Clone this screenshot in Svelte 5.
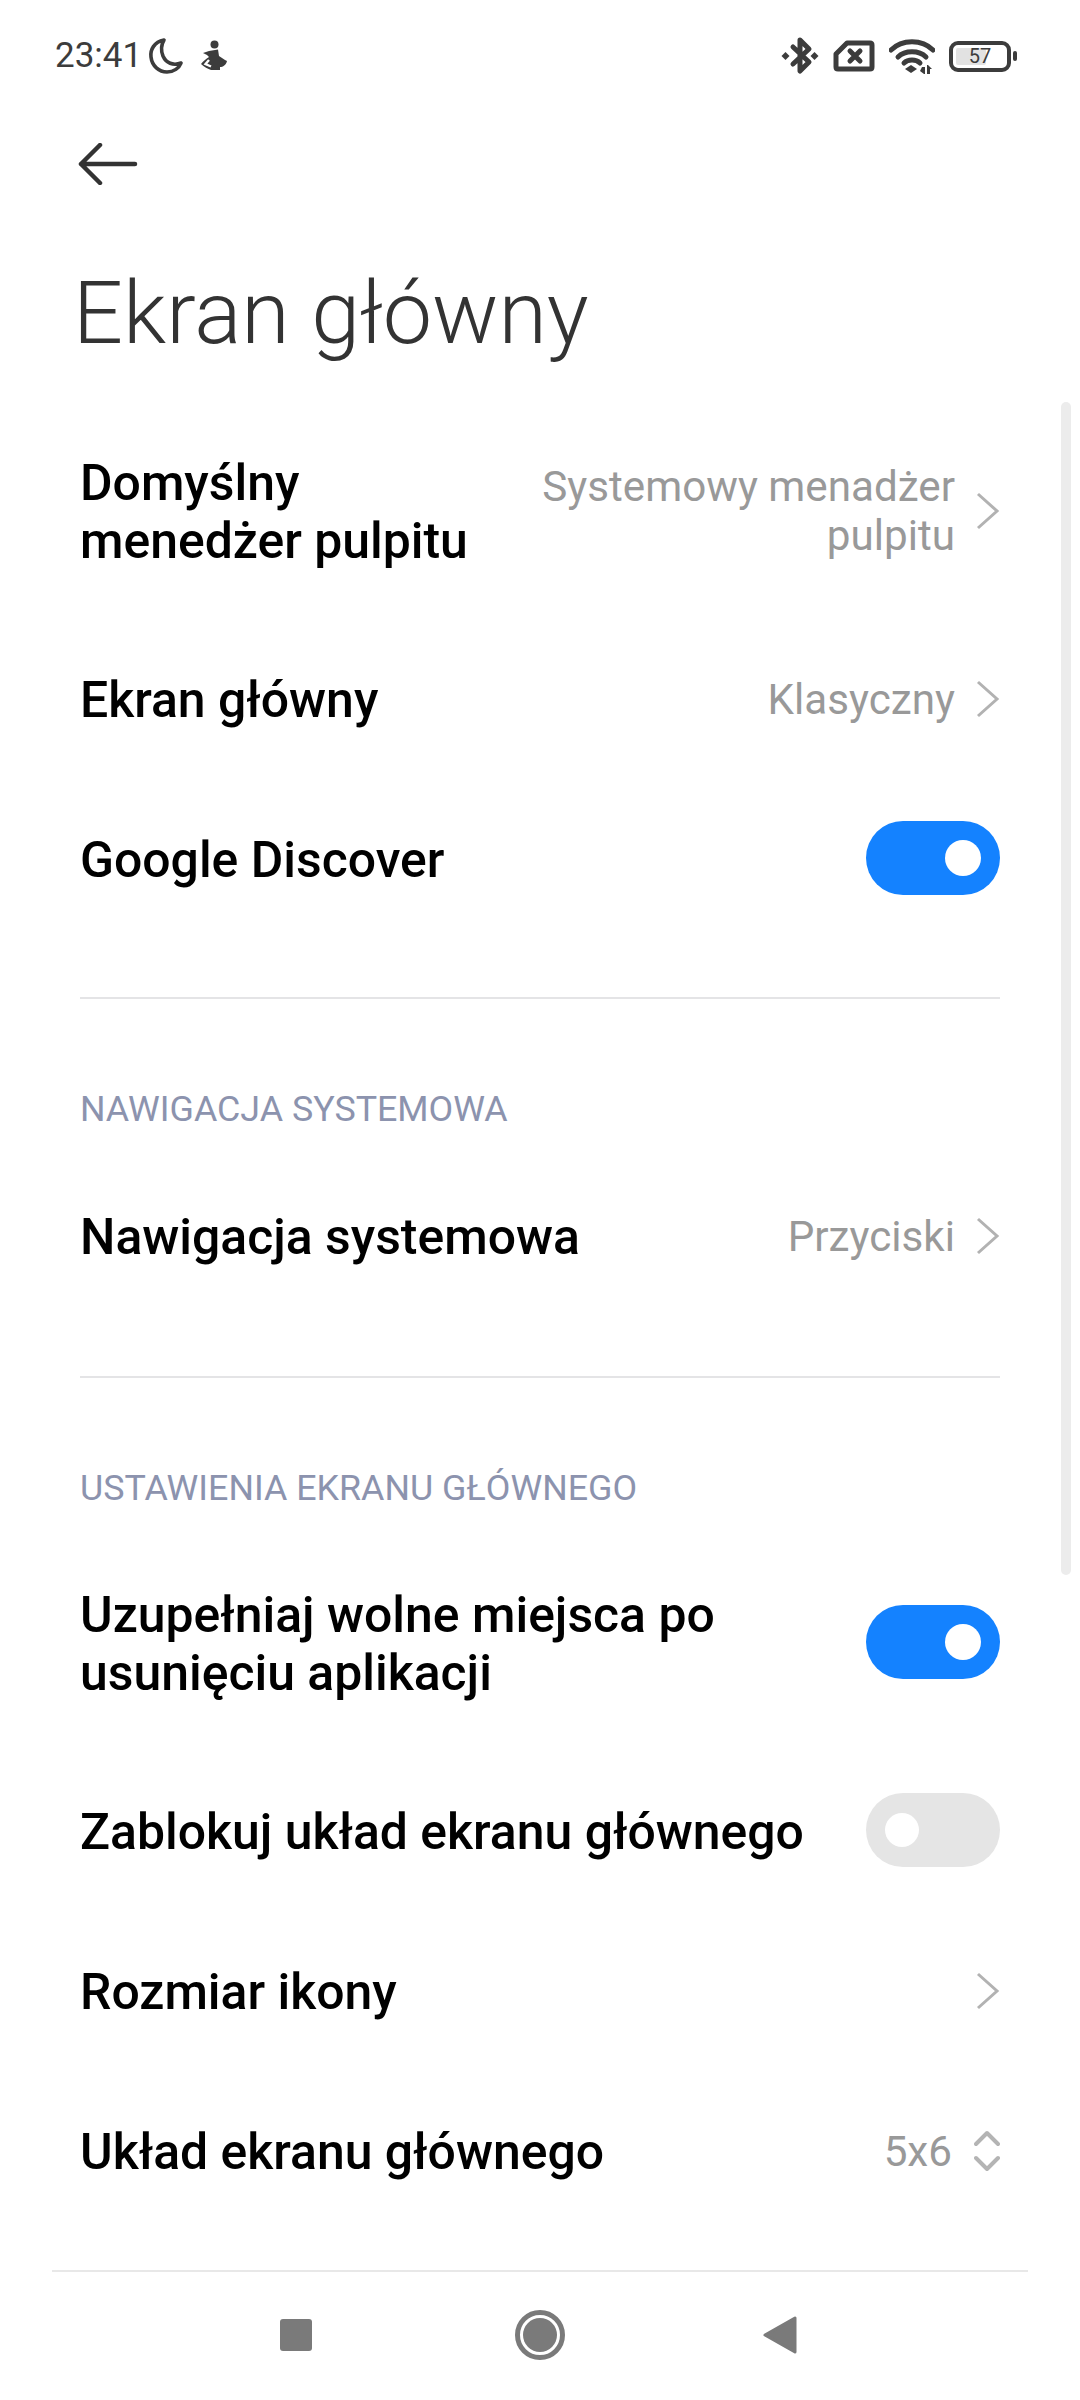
<script>
  const chevronPath = 'M2 2 L21 19 L2 36';
</script>

{#snippet chevron()}
  <svg class="chev" width="24" height="38" viewBox="0 0 24 38" aria-hidden="true"><path d={chevronPath} /></svg>
{/snippet}

{#snippet toggle(on)}
  <span class="toggle" class:on><span class="knob"></span></span>
{/snippet}

<div class="screen">
  <div class="status">
    <span class="time">23:41</span>
    <svg class="moon" width="36" height="38" viewBox="0 0 36 38"><path d="M16 3 C6 5 2 13 3 20 C4 29 11 35 19 35 C26 35 31 31 33 26 C25 29 18 26 15 19 C13 14 13 8 16 3 Z" /></svg>
    <svg class="person" width="28" height="32" viewBox="0 0 28 32"><circle cx="14.5" cy="4.5" r="4" /><path d="M9 11 L18 9.5 L19 16 L25 20 L27 21 C26 25 23 27 20 27 L20 30 L11 30 C8 29 4 27 1 24 C3 21 6 19 9 17 L7 15 L3 13 Z" /><path class="cut" d="M9 20 L5.5 24 L11 26.5" /></svg>
    <span class="spacer"></span>
    <svg class="st" width="38" height="40" viewBox="0 0 38 40"><path class="ln" d="M12 11 L28 26 L19 35 L19 4 L28 13 L12 28" /><path d="M4.5 16 L8.5 20 L4.5 24 L0.5 20 Z M33.5 16 L37.5 20 L33.5 24 L29.5 20 Z" /></svg>
    <svg class="st sim" width="42" height="32" viewBox="0 0 42 32"><path class="ln" d="M14 3 H37 Q39 3 39 5 V27 Q39 29 37 29 H5 Q3 29 3 27 V14 Z" /><path class="ln" d="M17 11 L27 21 M27 11 L17 21" /></svg>
    <svg class="st wifi" width="46" height="36" viewBox="0 0 46 36"><path class="ln" d="M2 12 C13 1 33 1 44 12" /><path class="ln" d="M9 19 C16 12 30 12 37 19" /><path class="ln" d="M15 25 C19 21 27 21 31 25" /><path d="M22 27 L28 31 L22 35 L16 31 Z" /><path d="M33 29 H36 V36 H35 L31 33 Z M38 27 H39 L43 31 H41 V36 H38 Z" /></svg>
    <span class="battery">
      <span class="cell"><span class="fill"></span><span class="pct">57</span></span>
      <span class="nub"></span>
    </span>
  </div>

  <div class="back">
    <svg width="60" height="42" viewBox="0 0 60 42"><path d="M22 2 L3 21 L22 40 M3 21 H57" /></svg>
  </div>

  <h1>Ekran główny</h1>

  <div class="row tall">
    <div class="label">Domyślny<br />menedżer pulpitu</div>
    <div class="value">Systemowy menadżer<br />pulpitu</div>
    {@render chevron()}
  </div>
  <div class="row">
    <div class="label">Ekran główny</div>
    <div class="value">Klasyczny</div>
    {@render chevron()}
  </div>
  <div class="row">
    <div class="label">Google Discover</div>
    {@render toggle(true)}
  </div>

  <div class="divider"></div>
  <div class="section">NAWIGACJA SYSTEMOWA</div>
  <div class="row">
    <div class="label">Nawigacja systemowa</div>
    <div class="value">Przyciski</div>
    {@render chevron()}
  </div>

  <div class="divider second"></div>
  <div class="section">USTAWIENIA EKRANU GŁÓWNEGO</div>
  <div class="row tall">
    <div class="label">Uzupełniaj wolne miejsca po<br />usunięciu aplikacji</div>
    {@render toggle(true)}
  </div>
  <div class="row">
    <div class="label">Zablokuj układ ekranu głównego</div>
    {@render toggle(false)}
  </div>
  <div class="row">
    <div class="label">Rozmiar ikony</div>
    {@render chevron()}
  </div>
  <div class="row">
    <div class="label">Układ ekranu głównego</div>
    <div class="value">5x6</div>
    <svg class="updown" width="26" height="42" viewBox="0 0 26 42"><path d="M2 14 L13 3 L24 14 M2 28 L13 39 L24 28" /></svg>
  </div>

  <nav>
    <span class="slot"><span class="square"></span></span>
    <span class="slot"><svg width="50" height="50" viewBox="0 0 50 50"><circle class="ring" cx="25" cy="25" r="22.5" /><circle cx="25" cy="25" r="17" /></svg></span>
    <span class="slot"><svg class="back-key" width="34" height="38" viewBox="0 0 34 38"><path class="tri" d="M32 2 V36 L2 19 Z" /></svg></span>
  </nav>

  <div class="scrollbar"></div>
</div>

<style>
  :global(body) { margin: 0; background: #fff; }
  .screen {
    position: relative;
    width: 1080px;
    height: 2400px;
    overflow: hidden;
    display: flex;
    flex-direction: column;
    background: #fff;
    font-family: Roboto, "Noto Sans", sans-serif;
    color: #000;
  }
  .status {
    display: flex;
    align-items: center;
    height: 74px;
    margin-top: 19px;
    padding: 0 63px 0 55px;
    color: #3c3c3c;
  }
  .time { font-size: 35px; line-height: 40px; }
  .moon { margin-left: 6px; }
  .moon path { fill: none; stroke: #3c3c3c; stroke-width: 3.6; stroke-linejoin: round; }
  .person { margin-left: 16px; fill: #3c3c3c; }
  .person .cut { fill: none; stroke: #fff; stroke-width: 2.4; }
  .spacer { flex: 1; }
  .st { fill: #3c3c3c; flex: none; }
  .sim { margin-left: 14px; }
  .wifi { margin-left: 14px; }
  .ln { fill: none; stroke: #3c3c3c; stroke-width: 5; stroke-linejoin: round; stroke-linecap: round; }
  .battery { display: flex; align-items: center; margin-left: 14px; }
  .cell {
    position: relative;
    display: flex;
    align-items: center;
    justify-content: center;
    box-sizing: border-box;
    width: 62px;
    height: 31px;
    border: 4px solid #3c3c3c;
    border-radius: 9px;
  }
  .fill {
    position: absolute;
    left: 3px;
    top: 3px;
    bottom: 3px;
    width: 30px;
    background: #e2e2e2;
    border-radius: 2px;
  }
  .pct { position: relative; font-size: 20px; line-height: 22px; color: #3c3c3c; }
  .nub { width: 4px; height: 10px; margin-left: 2px; background: #3c3c3c; border-radius: 2px; }
  .back { margin-top: 50px; padding-left: 78px; height: 42px; }
  .back svg { display: block; }
  .back path { fill: none; stroke: #333; stroke-width: 4.5; stroke-linecap: round; stroke-linejoin: round; }
  h1 {
    margin: 80px 0 0;
    padding-left: 73px;
    height: 138px;
    font-size: 88px;
    line-height: 96px;
    font-weight: 300;
    color: #333;
  }
  .row {
    display: flex;
    align-items: center;
    box-sizing: border-box;
    height: 160px;
    padding: 0 80px;
    flex: none;
  }
  .row.tall { height: 216px; }
  .label {
    flex: 1;
    padding-top: 2px;
    font-size: 49.9px;
    line-height: 58px;
    font-weight: 500;
    white-space: nowrap;
  }
  .value {
    font-size: 42.2px;
    line-height: 49px;
    color: #999;
    text-align: right;
    white-space: nowrap;
  }
  .chev { margin-left: 21px; flex: none; }
  .chev path { fill: none; stroke: #b2b2b2; stroke-width: 3; }
  .updown { margin-left: 22px; flex: none; }
  .updown path { fill: none; stroke: #b4b4b4; stroke-width: 4; stroke-linecap: round; stroke-linejoin: round; }
  .toggle {
    display: flex;
    align-items: center;
    box-sizing: border-box;
    width: 134px;
    height: 74px;
    margin-bottom: 2px;
    padding: 0 19px;
    border-radius: 37px;
    background: #e5e5e5;
    flex: none;
  }
  .toggle.on { background: #1482ff; justify-content: flex-end; }
  .knob { width: 34px; height: 34px; border-radius: 50%; background: #fff; }
  .toggle.on .knob { width: 36px; height: 36px; }
  .divider { height: 2px; margin: 58px 80px 0; background: #e4e4e6; flex: none; }
  .divider.second { margin-top: 60px; }
  .section {
    padding: 0 80px;
    margin-top: 90px;
    margin-bottom: 26px;
    height: 41px;
    font-size: 35.8px;
    line-height: 41px;
    color: #8c93ae;
    flex: none;
  }
  nav {
    position: absolute;
    left: 52px;
    right: 52px;
    bottom: 0;
    height: 126px;
    padding-bottom: 2px;
    border-top: 2px solid #e8e8e8;
    display: flex;
    align-items: center;
    justify-content: center;
  }
  .slot { width: 244px; display: flex; justify-content: center; align-items: center; }
  .square { width: 32px; height: 32px; border-radius: 3px; background: #7a7a7a; }
  nav svg { fill: #7a7a7a; display: block; }
  .back-key { margin-right: 8px; }
  .ring { fill: none; stroke: #7a7a7a; stroke-width: 5; }
  .tri { stroke: #7a7a7a; stroke-width: 3; stroke-linejoin: round; }
  .scrollbar {
    position: absolute;
    left: 1061px;
    top: 402px;
    width: 10px;
    height: 1173px;
    border-radius: 5px;
    background: #ececec;
  }
</style>
